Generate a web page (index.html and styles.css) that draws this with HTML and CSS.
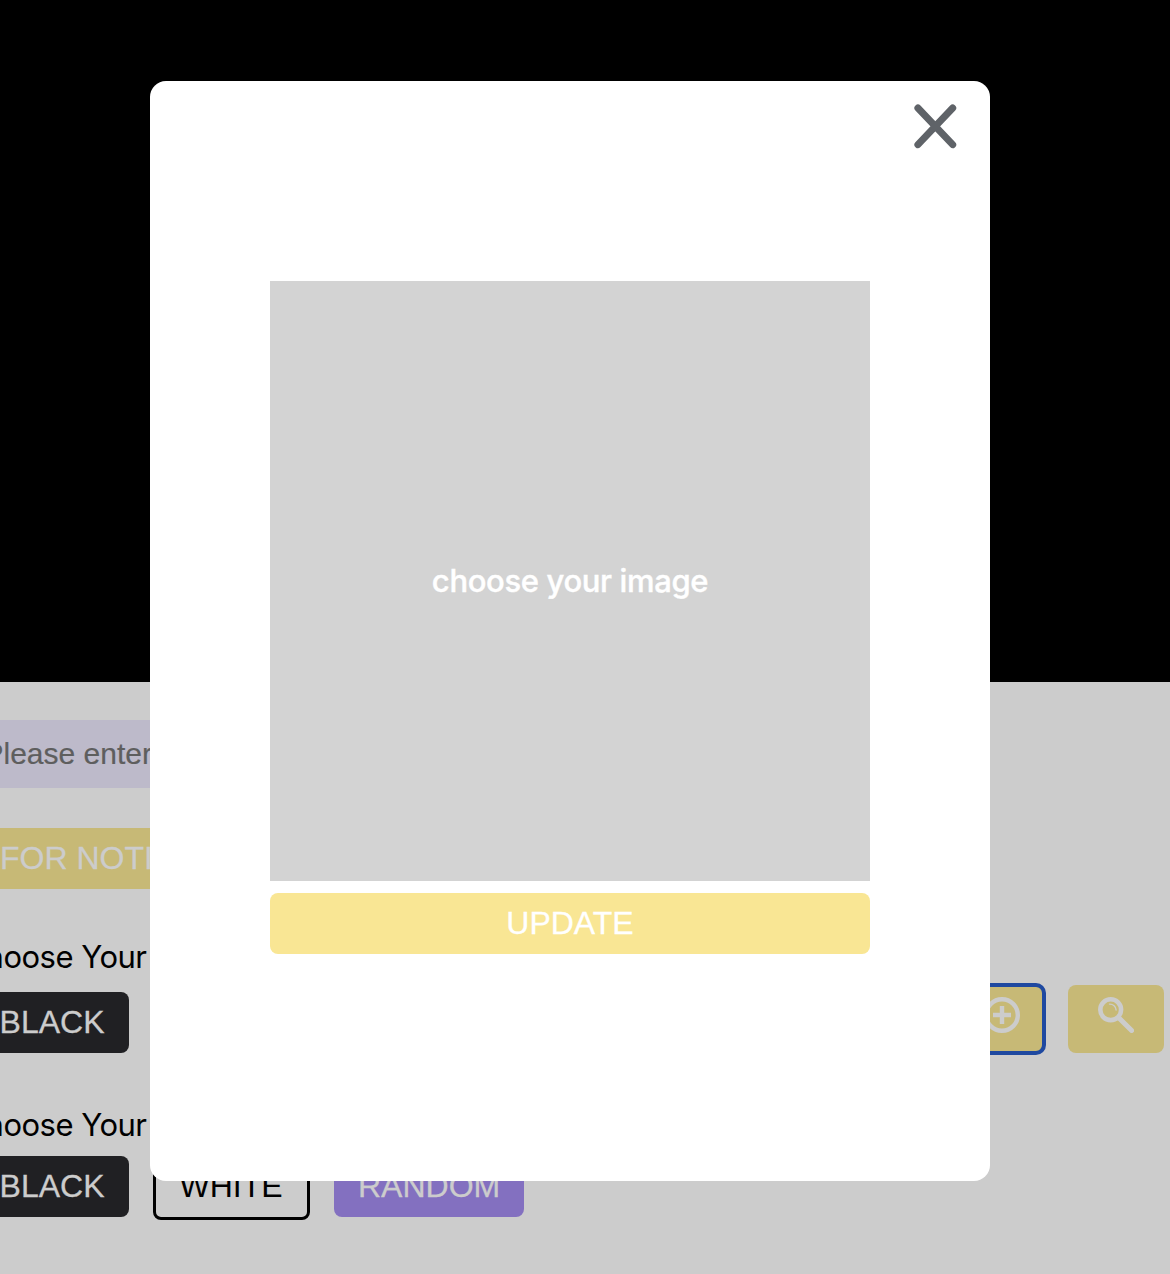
FILE: index.html
```html
<!DOCTYPE html>
<html lang="en">
<head>
<meta charset="utf-8">
<title>Update image</title>
<link rel="stylesheet" href="styles.css">
</head>
<body>
<main class="page">
  <div class="canvas"></div>
  <section class="controls">
    <div class="field">Please enter</div>
    <button class="btn btn-note">FOR NOTICE</button>
    <div class="label">Choose Your</div>
    <div class="row row-tools">
      <button class="btn btn-black">BLACK</button>
      <div class="tools">
        <button class="btn btn-icon btn-add" aria-label="Add">
          <svg width="36" height="36" viewBox="0 0 36 36" fill="none" stroke="currentColor" stroke-width="4.4"><circle cx="18" cy="18" r="15.8"/><path d="M18 9v18M9 18h18"/></svg>
        </button>
        <button class="btn btn-icon btn-search" aria-label="Search">
          <svg width="36" height="36" viewBox="0 0 36 36" fill="none" stroke="currentColor" stroke-linecap="round"><circle cx="12.7" cy="12.7" r="10.4" stroke-width="4.6"/><path d="M21 21L33.6 33.6" stroke-width="5"/><path d="M11.5 7.1C15.2 7 18 9.5 18.1 13" stroke-width="1.4"/></svg>
        </button>
      </div>
    </div>
    <div class="label label-second">Choose Your</div>
    <div class="row">
      <button class="btn btn-black">BLACK</button>
      <button class="btn btn-white">WHITE</button>
      <button class="btn btn-random">RANDOM</button>
    </div>
  </section>
</main>
<div class="overlay">
  <div class="modal" role="dialog">
    <button class="close" aria-label="Close">
      <svg width="44" height="46" viewBox="0 0 44 46" fill="none" stroke="currentColor" stroke-width="7" stroke-linecap="round"><path d="M4.9 5L39.7 41.6M39.7 5L4.9 41.6"/></svg>
    </button>
    <div class="picker">choose your image</div>
    <button class="btn btn-update">UPDATE</button>
  </div>
</div>
</body>
</html>
```
FILE: styles.css
```css
* { box-sizing: border-box; }
body {
  margin: 0;
  height: 1274px;
  overflow: hidden;
  font-family: Inter, sans-serif;
  font-size: 31px;
  color: #000;
}
button { margin: 0; border: 0; padding: 0; background: none; }
svg { display: block; }
.page {
  display: flex;
  flex-direction: column;
  height: 1274px;
  overflow: hidden;
  background: #ccc;
}
.canvas { flex: none; height: 682px; background: #000; }
.controls {
  display: flex;
  flex-direction: column;
  align-items: flex-start;
  margin-left: -25px;
  padding-top: 38px;
}
.field {
  width: 600px;
  height: 68px;
  padding-left: 8.5px;
  background: #bdbaca;
  color: #5e5e5e;
  font: 30px/68px "Liberation Sans", Arial, sans-serif;
  -webkit-text-stroke: 0.2px currentColor;
}
.btn {
  flex: none;
  height: 61px;
  padding: 0 24px 2px;
  border-radius: 8px;
  color: #ccc;
  font: 32px/58px "Liberation Sans", Arial, sans-serif;
  white-space: nowrap;
  -webkit-text-stroke: 0.3px currentColor;
}
.btn-note { margin-top: 40px; padding-left: 25px; background: #c7b976; }
.label {
  height: 40px;
  margin-top: 48px;
  line-height: 39px;
  width: 171.5px;
  white-space: nowrap;
  letter-spacing: -0.5px;
  display: flex;
  justify-content: flex-end;
}
.row { display: flex; align-items: center; gap: 24px; height: 67px; margin-top: 8px; }
.row-tools { align-items: flex-end; justify-content: space-between; width: 1189px; height: 68px; }
.label-second { margin-top: 52px; }
.tools { display: flex; gap: 24px; }
.btn-black { width: 154px; background: #202023; }
.btn-white {
  height: 67px;
  width: 157px;
  padding: 0 1px 2px 0;
  border: 3px solid #000;
  color: #000;
  -webkit-text-stroke: 0;
}
.btn-random { width: 190px; background: #8370c0; }
.btn-icon {
  display: flex;
  align-items: flex-start;
  height: 68px;
  padding-top: 12px;
  background: #c7b976;
}
.btn-add { outline: 4px solid #1f49a0; outline-offset: -2px; }
.btn-search { padding-left: 30px; padding-right: 30px; }
.overlay {
  position: absolute;
  inset: 0;
  display: flex;
  align-items: flex-start;
  padding: 81px 0 0 150px;
}
.modal {
  display: flex;
  flex-direction: column;
  align-items: center;
  width: 840px;
  height: 1100px;
  padding-top: 22px;
  border-radius: 16px;
  background: #fff;
}
.close { align-self: flex-end; height: 46px; margin-right: 33px; color: #5f6368; }
.picker {
  width: 600px;
  height: 600px;
  margin-top: 132px;
  background: #d3d3d3;
  color: #fff;
  font-weight: 500;
  line-height: 600px;
  letter-spacing: -0.36px;
  text-align: center;
  -webkit-text-stroke: 0.4px currentColor;
}
.btn-update { width: 600px; margin-top: 12px; background: #f9e694; color: #fff; }
```
